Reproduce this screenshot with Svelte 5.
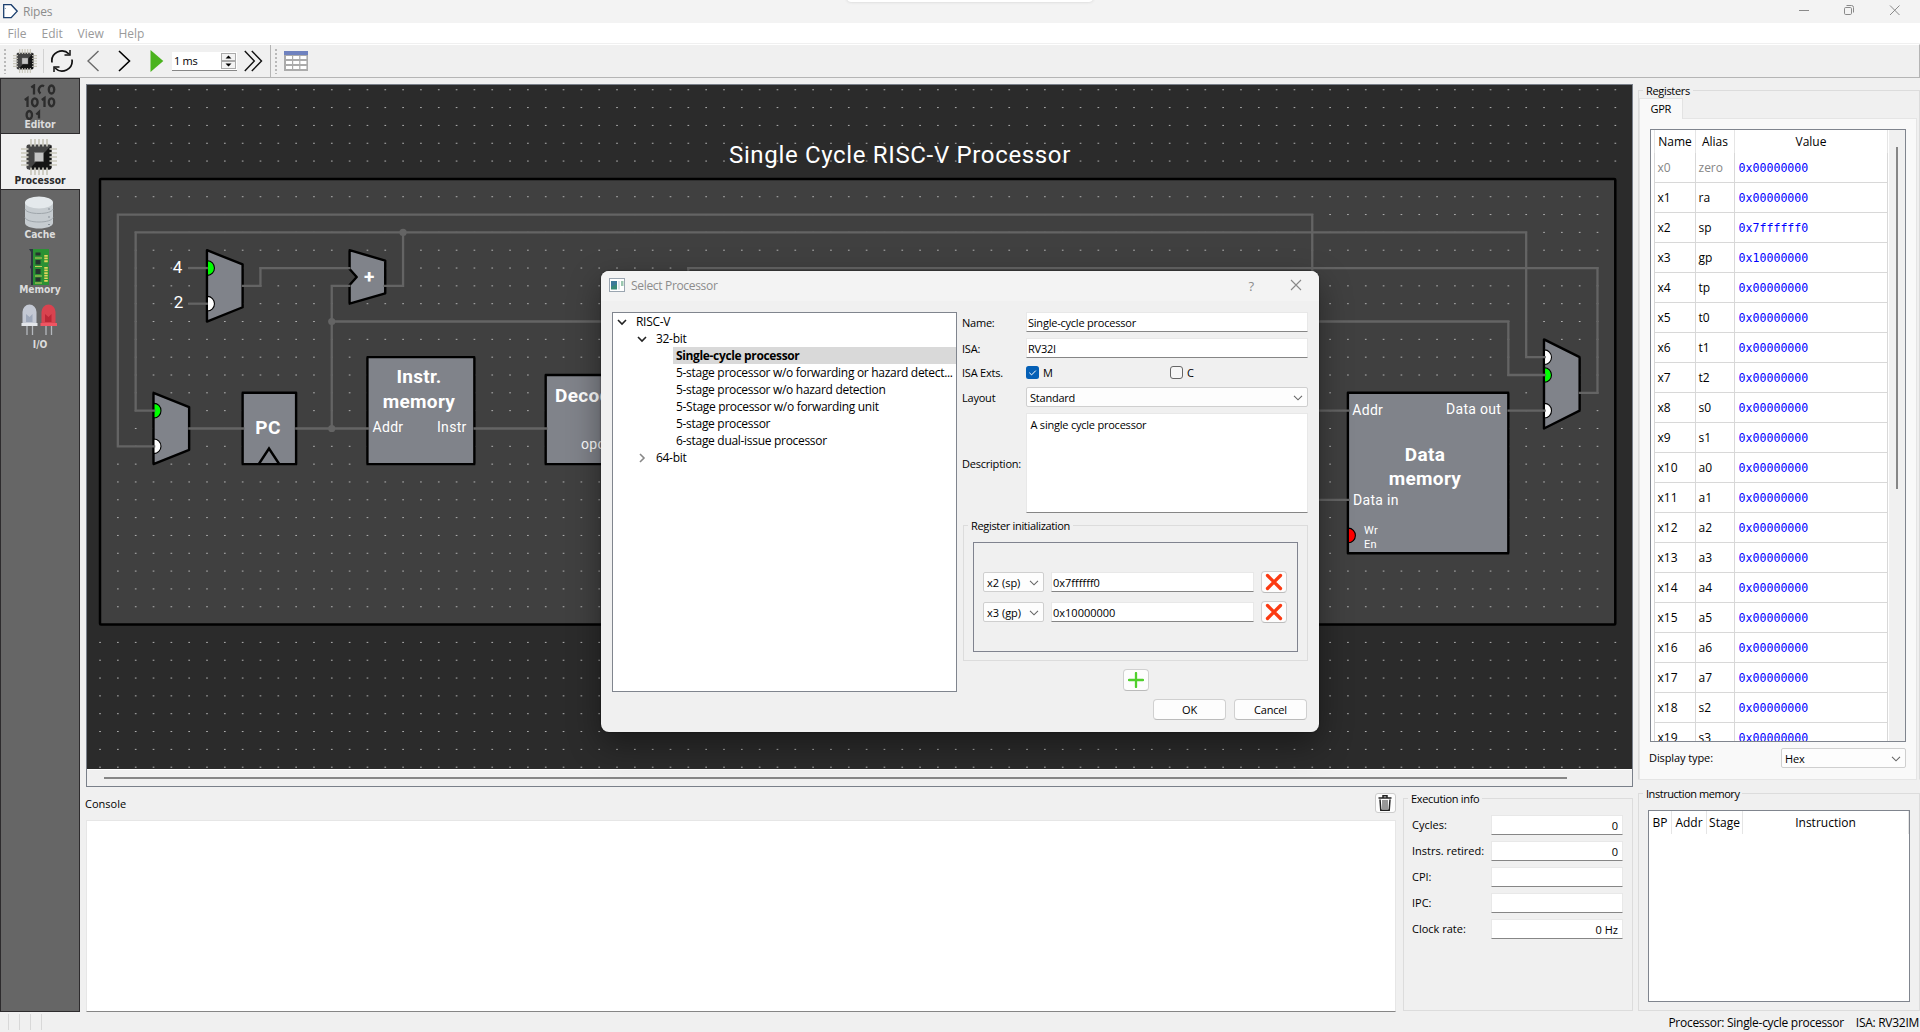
<script>
  const U = 17.827;
  const X = (g) => +(13 + g * U).toFixed(2);
  const Y = (g) => +(93.9 + g * U).toFixed(2);
  const pts = (list) => list.map(([a, b]) => `${X(a)},${Y(b)}`).join(' ');

  // Grid dots; positions under the outer frame are skipped
  const dots = [];
  for (let r = -5; r <= 33; r++) {
    for (let c = 0; c <= 85; c++) {
      const side = (c === 0 || c === 85) && r >= 0 && r <= 25;
      if (!side && r !== 0 && r !== 25) dots.push([c, r]);
    }
  }
  const dotPath = dots.map(([c, r]) => `M${X(c) - 0.8} ${Y(r)}h1.7`).join('');

  const wires = [
    [[3.1, 15], [1, 15], [1, 2], [68, 2], [68, 8]],
    [[3.1, 13], [2, 13], [2, 3], [80, 3], [80, 10], [81.1, 10]],
    [[15.9, 6], [17, 6], [17, 3]],
    [[4.95, 5], [6.05, 5]],
    [[4.95, 7], [6.05, 7]],
    [[7.95, 6], [9, 6], [9, 5], [14.05, 5]],
    [[4.95, 14], [8.1, 14]],
    [[10.95, 14], [15.1, 14]],
    [[13, 14], [13, 6], [14.05, 6]],
    [[13, 8], [79, 8], [79, 11], [81.1, 11]],
    [[20.95, 14], [25.1, 14]],
    [[82.95, 12], [84, 12], [84, 5], [33, 5], [33, 8]],
    [[66, 13], [70.1, 13]],
    [[66, 18], [70.1, 18]],
    [[78.95, 13], [81.1, 13]]
  ];
  const nodes = [[17, 3], [13, 8], [13, 14]];
  const muxes = [
    { p: [[6, 4], [8, 4.8], [8, 7.2], [6, 8]], ports: [[6, 5, '#00ff00'], [6, 7, '#fff']] },
    { p: [[3, 12], [5, 12.8], [5, 15.2], [3, 16]], ports: [[3, 13, '#00ff00'], [3, 15, '#fff']] },
    { p: [[81, 9], [83, 10], [83, 13], [81, 14]], ports: [[81, 10, '#fff'], [81, 11, '#00ff00'], [81, 13, '#fff']] }
  ];
  const boxes = [[8, 12, 3, 4], [15, 10, 6, 6], [25, 11, 6, 5], [70, 12, 9, 9]];

  const alias = ['zero', 'ra', 'sp', 'gp', 'tp', 't0', 't1', 't2', 's0', 's1', 'a0', 'a1', 'a2', 'a3', 'a4', 'a5', 'a6', 'a7', 's2', 's3'];
  const regs = alias.map((a, i) => ({
    name: 'x' + i,
    alias: a,
    value: i === 2 ? '0x7ffffff0' : i === 3 ? '0x10000000' : '0x00000000'
  }));

  const tree = [
    { t: 'RISC-V', l: 0, open: true },
    { t: '32-bit', l: 1, open: true },
    { t: 'Single-cycle processor', l: 2, sel: true },
    { t: '5-stage processor w/o forwarding or hazard detect...', l: 2 },
    { t: '5-stage processor w/o hazard detection', l: 2 },
    { t: '5-Stage processor w/o forwarding unit', l: 2 },
    { t: '5-stage processor', l: 2 },
    { t: '6-stage dual-issue processor', l: 2 },
    { t: '64-bit', l: 1, open: false }
  ];
  const stats = [['Cycles:', '0'], ['Instrs. retired:', '0'], ['CPI:', ''], ['IPC:', ''], ['Clock rate:', '0 Hz']];
  const inits = [['x2 (sp)', '0x7ffffff0'], ['x3 (gp)', '0x10000000']];
  const pins = [10, 14, 18, 22, 26];
</script>

{#snippet chip(size)}
  <svg width={size} height={size} viewBox="0 0 36 36">
    <path d={pins.map((p) => `M${p} 0v36M0 ${p}h36`).join('')} stroke="#c9c7bb" stroke-width="1.7" />
    <rect x="5.5" y="5.5" width="25" height="25" rx="2" fill="#444" />
    <path d="M30.5 6v22.500a2 2 0 0 1-2 2H8z" fill="#151515" />
    <path d={pins.map((p) => `M${p} 5v2.500M${p} 28.500v2.500M5 ${p}h2.500M28.500 ${p}h2.500`).join('')} stroke="#d8d6cc" stroke-width="1.5" />
    <rect x="13.500" y="13.500" width="9" height="9" fill="#c4c4c4" stroke="#777" stroke-width=".6" />
  </svg>
{/snippet}

{#snippet chev()}
  <svg width="10" height="6" viewBox="0 0 10 6"><path d="M1 .8l4 4 4-4" fill="none" stroke="#666" stroke-width="1.1" /></svg>
{/snippet}

<div class="app">
  <div class="titlebar">
    <svg class="logo" width="15" height="15" viewBox="0 0 15 15"><path d="M.7 .7h7.500l6 6.500-6 6.500H.7z" fill="#fff" stroke="#1c3f6e" stroke-width="1.300" /><path d="M1.500 4.500h1.500" stroke="#9ab" /></svg>
    <span class="ttl">Ripes</span>
    <span class="notch"></span>
    <svg class="winctl" width="104" height="12" viewBox="0 0 104 12" fill="none" stroke="#8a8a8a">
      <path d="M1 6.500h10M92 1.500l9.500 9.500M101.500 1.500L92 11" />
      <rect x="46.500" y="3.500" width="7" height="7" rx="1.200" /><path d="M48.500 1.500h5a2 2 0 0 1 2 2v5" />
    </svg>
  </div>
  <div class="menubar"><span class="m1">File</span><span class="m2">Edit</span><span class="m3">View</span><span>Help</span></div>
  <div class="toolbar">
    <i class="grip"></i>
    <span class="chipbtn">{@render chip(24)}</span>
    <i class="sep"></i>
    <svg class="refresh" width="24" height="24" viewBox="0 0 24 24" fill="none" stroke="#111" stroke-width="1.700">
      <path d="M2 13.500A10 10 0 0 1 19 5M22 10.500A10 10 0 0 1 5 19" /><path d="M14.500 6h5.500V1M9.500 18H4v5" stroke-width="1.500" />
    </svg>
    <svg class="prev" width="13" height="22" viewBox="0 0 13 22"><path d="M11.500 1L1 11l10.500 10" fill="none" stroke="#6a6a6a" stroke-width="1.400" /></svg>
    <svg class="next" width="13" height="22" viewBox="0 0 13 22"><path d="M1 1l10.500 10L1 21" fill="none" stroke="#000" stroke-width="1.600" /></svg>
    <svg class="play" width="14" height="22" viewBox="0 0 14 22"><path d="M.5 0L13.300 11 .5 22z" fill="#4ab31d" /></svg>
    <div class="spin"><span>1 ms</span>
      <svg width="15" height="16" viewBox="0 0 15 16"><rect x=".5" y=".5" width="14" height="7" fill="#f3f3f3" stroke="#aaa" /><rect x=".5" y="8.500" width="14" height="7" fill="#f3f3f3" stroke="#aaa" /><path d="M4.500 5.500h6l-3-3zM4.500 10.500h6l-3 3z" fill="#000" /></svg>
    </div>
    <svg class="ff" width="19" height="22" viewBox="0 0 19 22"><path d="M.800 1l9.500 10-9.500 10M7.800 1l9.700 10-9.700 10" fill="none" stroke="#111" stroke-width="1.400" /></svg>
    <i class="edge"></i>
    <i class="grip g2"></i>
    <svg class="tbl" width="24" height="20" viewBox="0 0 24 20"><rect width="24" height="20" fill="#ababab" /><rect width="24" height="4" fill="#6f82bf" />
      <path d="M2 6.500h6M9.200 6.500h6M16.400 6.500h6M2 11.500h6M9.200 11.500h6M16.400 11.500h6M2 16.500h6M9.200 16.500h6M16.400 16.500h6" stroke="#fff" stroke-width="3" /></svg>
  </div>

  <div class="main">
    <div class="side">
      <div class="tab ed">
        <svg width="36" height="37" viewBox="0 0 36 37" class="bin" fill="none" stroke="#2c2c2c" stroke-width="2.300">
          <path d="M13 10.500V1.500L10.300 3.500M23 2.300a3.200 4 0 1 0-3.500 7.200" /><ellipse cx="30.500" cy="5.500" rx="2.700" ry="4" />
          <path d="M6.500 23V14L3.800 16M23.500 23V14L20.800 16" /><ellipse cx="13.800" cy="18.300" rx="2.800" ry="4" /><ellipse cx="30.500" cy="18.300" rx="2.700" ry="4" />
          <ellipse cx="8.300" cy="31" rx="2.700" ry="4" /><path d="M18 34.500V28l-2.700 2.500" />
        </svg>
        <b>Editor</b>
      </div>
      <div class="tab on"><span>{@render chip(36)}</span><b>Processor</b></div>
      <div class="tab">
        <svg width="36" height="36" viewBox="0 0 36 36"><path d="M4 8v21c0 3 6 5.500 14 5.500s14-2.500 14-5.500V8z" fill="#c6ccd0" /><ellipse cx="18" cy="8.500" rx="14" ry="6" fill="#e4e9ec" />
          <path d="M4 15c1 3 7 4.500 14 4.500S31 18 32 15M4 23.500c1 3 7 4.500 14 4.500s13-1.500 14-4.500" fill="none" stroke="#9fa6ab" stroke-width="1" /><path d="M28 14.500v1M28 22.500v1M28 30v1" stroke="#68727a" stroke-width="1.300" /></svg>
        <b>Cache</b>
      </div>
      <div class="tab">
        <svg width="36" height="36" viewBox="0 0 36 36"><path d="M8 0h5v36H10V20l-1-2 1-2V3z" fill="#2b3540" /><path d="M12 0h16v14l-1 2 1 2v18H12z" fill="#2b9134" />
          <path d="M14.500 3.500h5v3h-5zM14.500 11h5v4.500h-5zM14.500 20h5v5h-5zM14.500 28.500h5v4h-5z" fill="#26352f" /><path d="M14 9h7M14 17.500h7M14 27h7M14 34h7" stroke="#c9c95a" stroke-width="1.200" /><path d="M25 6v8M25 18v15" stroke="#e4d65c" stroke-width="3.500" stroke-dasharray="1.700 .9" /></svg>
        <b>Memory</b>
      </div>
      <div class="tab">
        <svg width="36" height="36" viewBox="0 0 36 36"><path d="M6 22v9M11.500 22v9M25 22v9M30.500 22v9" stroke="#b4b8bd" stroke-width="1.300" />
          <path d="M1.500 20V8a7 7.500 0 0 1 14 0v12z" fill="#c4c9d4" /><path d="M.5 19h16v3H.5z" fill="#e3e6ea" /><path d="M5 10l3.500 3 3-3v8H5z" fill="#9ea8ba" />
          <path d="M20.500 20V8a7 7.500 0 0 1 14 0v12z" fill="#d9434f" /><path d="M19.500 19H36v3H19.500z" fill="#f05562" /><path d="M24 10l3.500 3 3-3v8H24z" fill="#bb2736" /></svg>
        <b>I/O</b>
      </div>
    </div>

    <div class="mid">
      <div class="canvas">
        <svg class="diagram" width="1545" height="684" viewBox="0 0 1545 684">
          <rect width="1545" height="684" fill="#2b2b2b" />
          <rect x={X(0)} y={Y(0)} width={85 * U} height={25 * U} rx="1" fill="#404040" stroke="#000" stroke-width="2.500" />
          <path class="dots" d={dotPath} />
          {#each boxes as [x, y, w, h]}
            <rect class="comp" x={X(x)} y={Y(y)} width={w * U} height={h * U} />
          {/each}
          {#each muxes as m}
            <polygon class="comp" points={pts(m.p)} />
            {#each m.ports as [px, py, c]}
              <path d={`M${X(px) + 0.5} ${Y(py) - 7.3}a7 7.300 0 0 1 0 14.600z`} fill={c} stroke="#000" stroke-width="1.100" />
            {/each}
          {/each}
          <polygon class="comp" points={pts([[14, 4], [16, 4.58], [16, 6.42], [14, 7], [14, 5.95], [14.4, 5.5], [14, 5.05]])} />
          <path d={`M${X(70) + 0.5} ${Y(20) - 7.3}a7 7.300 0 0 1 0 14.600z`} fill="#f00" stroke="#000" stroke-width="1.100" />
          <path d="M171.500 379.500l10.500-16 10.500 16" fill="none" stroke="#000" stroke-width="2.400" />
          {#each wires as w}<polyline class="wire" points={pts(w)} />{/each}
          {#each nodes as [a, b]}<circle cx={X(a)} cy={Y(b)} r="3.600" fill="#646464" />{/each}
          <text class="big" x="813" y="78">Single Cycle RISC-V Processor</text>
          <text class="num" x="90.500" y="188">4</text><text class="num" x="91.500" y="223">2</text>
          <text class="plus" x="282.300" y="198">+</text>
          <text class="h" x="181" y="349">PC</text>
          <text class="h" x="332" y="298">Instr.</text><text class="h" x="332" y="322.500">memory</text>
          <text class="h" x="501" y="316.500">Decode</text>
          <text class="p" x="285.500" y="347">Addr</text><text class="p" x="350" y="347">Instr</text><text class="p" x="494" y="364">opcode</text>
          <text class="p" x="1265.300" y="330">Addr</text><text class="p" x="1359" y="329">Data out</text><text class="p" x="1266" y="420">Data in</text>
          <text class="h" x="1338" y="376">Data</text><text class="h" x="1338" y="400">memory</text>
          <text class="s" x="1277" y="449">Wr</text><text class="s" x="1277" y="463">En</text>
        </svg>
        <div class="hscroll"><i></i></div>
      </div>
      <div class="bottom">
        <div class="console">
          <div class="chead"><span>Console</span>
            <span class="trash"><svg width="14" height="16" viewBox="0 0 14 16" fill="none" stroke="#222"><path d="M.5 3h13M5 2.500V.8h4v1.700" stroke-width="1.500" /><path d="M2 4.500l.8 10.700h8.400L12 4.500" stroke-width="1.500" /><path d="M5 5v9M7 5v9M9 5v9" stroke="#444" stroke-width="1.100" /></svg></span>
          </div>
          <div class="cbox"></div>
        </div>
        <div class="group exec"><span class="legend">Execution info</span>
          {#each stats as [l, v]}<div class="stat"><span>{l}</span><div class="field r">{v}</div></div>{/each}
        </div>
      </div>
    </div>

    <div class="right">
      <div class="group regs"><span class="legend">Registers</span>
        <div class="gpr">GPR</div>
        <div class="pane">
          <div class="rtable">
            <div class="rows">
              <div class="row head"><span>Name</span><span>Alias</span><span>Value</span></div>
              {#each regs as r, i}
                <div class="row" class:dim={i === 0}><span>{r.name}</span><span>{r.alias}</span><span class="mono">{r.value}</span></div>
              {/each}
            </div>
            <div class="vs"><i></i></div>
          </div>
          <div class="disp"><span>Display type:</span><div class="combo"><span>Hex</span>{@render chev()}</div></div>
        </div>
      </div>
      <div class="group imem"><span class="legend">Instruction memory</span>
        <div class="itable"><span>BP</span><span>Addr</span><span>Stage</span><span>Instruction</span></div>
      </div>
    </div>
  </div>
  <div class="status"><i></i><i></i><i></i><i></i><span class="sp1">Processor: Single-cycle processor</span><span class="sp2">ISA: RV32IM</span></div>

  <div class="dialog">
    <div class="dtitle">
      <svg width="16" height="14" viewBox="0 0 16 14"><rect x=".5" y=".5" width="15" height="13" fill="#fff" stroke="#9aa5b0" /><rect x="2" y="3" width="6" height="8.500" fill="#3a8a78" /><path d="M2 3h6v3l-6 3z" fill="#3f6fb0" opacity=".6" /><path d="M9 3h2v8.500H9z" fill="#dde4ea" /><path d="M12 3h2.500v5H12z" fill="#9cc8b0" /></svg>
      <span class="dname">Select Processor</span><span class="q">?</span>
      <svg class="x" width="12" height="12" viewBox="0 0 12 12"><path d="M1 1l10 10M11 1L1 11" stroke="#888" stroke-width="1.100" /></svg>
    </div>
    <div class="dbody">
      <div class="tree">
        {#each tree as n}
          <div class={'node l' + n.l} class:sel={n.sel}>
            {#if n.l < 2}
              <svg width="10" height="10" viewBox="0 0 10 10" fill="none"><path d={n.open ? 'M1 3l4 4 4-4' : 'M3 1l4 4-4 4'} stroke={n.open ? '#222' : '#888'} stroke-width="1.600" /></svg>
            {/if}
            <span>{n.t}</span>
          </div>
        {/each}
      </div>
      <div class="form">
        <div class="fr"><span>Name:</span><div class="field">Single-cycle processor</div></div>
        <div class="fr"><span>ISA:</span><div class="field">RV32I</div></div>
        <div class="fr exts"><span>ISA Exts.</span>
          <div class="ck"><svg width="13" height="13" viewBox="0 0 13 13"><rect width="13" height="13" rx="2.500" fill="#0560b6" /><path d="M3.300 6.700l2.300 2.200 4.200-4.300" fill="none" stroke="#fff" /></svg>M</div>
          <div class="ck"><svg width="13" height="13" viewBox="0 0 13 13"><rect x=".5" y=".5" width="12" height="12" rx="2.500" fill="#f6f6f6" stroke="#666" /></svg>C</div>
        </div>
        <div class="fr"><span>Layout</span><div class="combo"><span>Standard</span>{@render chev()}</div></div>
        <div class="fr desc"><span>Description:</span><div class="field area">A single cycle processor</div></div>
        <div class="group init"><span class="legend">Register initialization</span>
          <div class="frame">
            {#each inits as [r, v]}
              <div class="ir"><div class="combo"><span>{r}</span>{@render chev()}</div><div class="field">{v}</div>
                <div class="btn sq"><svg width="18" height="18" viewBox="0 0 18 18"><path d="M2.500 2.500l13 13M15.500 2.500l-13 13" stroke="#fb3a12" stroke-width="3.300" stroke-linecap="round" /></svg></div>
              </div>
            {/each}
          </div>
        </div>
        <div class="btn sq add"><svg width="16" height="16" viewBox="0 0 16 16"><path d="M8 1v14M1 8h14" stroke="#4fd02c" stroke-width="2.300" stroke-linecap="round" /></svg></div>
      </div>
    </div>
    <div class="dbtns"><div class="btn">OK</div><div class="btn">Cancel</div></div>
  </div>
</div>

<style>
  :global(body) { background: #f0f0f0; overflow: hidden; }
  .app, .app * { box-sizing: border-box; }
  .app { position: relative; width: 1920px; height: 1032px; display: flex; flex-direction: column; background: #f0f0f0; color: #000; font: 11px/14px "Open Sans", sans-serif; white-space: nowrap; }
  svg { display: block; flex: none; }
  .titlebar { height: 23px; background: #f3f3f3; display: flex; align-items: center; padding-left: 3px; position: relative; font-size: 12px; color: #8c8c8c; }
  .ttl { margin-left: 5px; padding-top: 1px; letter-spacing: -.2px; }
  .notch { position: absolute; left: 847px; top: -6px; width: 246px; height: 8px; border-radius: 5px; background: #fff; box-shadow: 0 0 3px #ccc; }
  .winctl { margin-left: auto; margin-right: 18px; margin-top: -3px; }
  .menubar { height: 21px; background: #fff; border-bottom: 1px solid #f0f0f0; display: flex; align-items: center; padding: 2px 0 0 7.5px; font-size: 12px; color: #9a9a9a; }
  .m1 { width: 34px; } .m2 { width: 36px; } .m3 { width: 41px; }
  .toolbar { height: 34px; border-top: 1px solid #fff; border-bottom: 1px solid #b5b5b5; border-right: 1px solid #b5b5b5; display: flex; align-items: center; }
  .grip { width: 2px; height: 25px; margin-left: 4px; background: repeating-linear-gradient(#b9b9b9 0 2px, transparent 2px 4px); }
  .chipbtn { margin-left: 7px; }
  .sep { width: 1px; height: 24px; background: #d2d2d2; margin-left: 6px; }
  .refresh { margin-left: 6px; } .prev { margin-left: 13px; } .next { margin-left: 18px; } .play { margin-left: 19px; }
  .spin { margin-left: 8px; width: 65px; height: 19px; background: #fff; border-bottom: 1px solid #868686; display: flex; align-items: center; justify-content: space-between; padding: 0 1px 0 2px; letter-spacing: -.3px; }
  .spin span { padding-top: 1px; }
  .ff { margin-left: 7px; }
  .edge { width: 1px; height: 33px; background: #b5b5b5; margin-left: 7px; }
  .tbl { margin-left: 7px; }
  .main { flex: 1; display: flex; min-height: 0; }
  .side { width: 80px; background: #666; border: 1px solid #2d2b2d; border-top-width: 0; }
  .tab { height: 55px; display: flex; flex-direction: column; align-items: center; padding: 4px 2px 0 0; color: #dcdcdc; font: bold 10.2px/12px "DejaVu Sans Condensed", "DejaVu Sans", sans-serif; font-stretch: condensed; }
  .tab b { margin-top: -1px; padding-left: 2px; }
  .tab.ed { height: 56px; border: solid #2d2b2d; border-width: 1px 0; padding-top: 5px; }
  .bin { margin-bottom: -1px; }
  .tab.on { height: 56px; background: #f0f0f0; color: #2a2a2a; margin-right: -1px; border-bottom: 1px solid #2d2b2d; padding-top: 5px; padding-right: 3px; }
  .tab.on b { margin-top: 0; }
  .mid { width: 1553px; padding: 6px 0 0 6px; display: flex; flex-direction: column; }
  .canvas { height: 703px; border: 1px solid #7a808a; }
  .hscroll { height: 17px; border-top: 1px solid #fff; padding: 7px 0 0 17px; }
  .hscroll i { display: block; width: 1463px; height: 2px; background: #868686; }
  .dots { stroke: #b0b0b0; stroke-width: 1; }
  .comp { fill: #80838a; stroke: #000; stroke-width: 2.4; stroke-linejoin: round; }
  .wire { fill: none; stroke: #646464; stroke-width: 2.3; }
  text { font-family: Roboto, sans-serif; fill: #fff; }
  .big { font-size: 24px; text-anchor: middle; letter-spacing: .66px; }
  .num { font-size: 17px; text-anchor: middle; }
  .plus { font-size: 19px; font-weight: 700; text-anchor: middle; }
  .h { font-size: 19px; font-weight: 700; text-anchor: middle; letter-spacing: .3px; }
  .p { font-size: 14px; letter-spacing: .3px; }
  .s { font-size: 11px; letter-spacing: .3px; }
  .bottom { flex: 1; display: flex; gap: 7px; }
  .console { width: 1310px; display: flex; flex-direction: column; }
  .chead { height: 33px; display: flex; justify-content: space-between; align-items: center; }
  .chead > span:first-child { margin-left: -1px; }
  .trash { width: 21px; height: 20px; border: 1px solid #ccc; border-radius: 3px; background: #fdfdfd; display: flex; align-items: center; justify-content: center; margin-bottom: 1px; padding-right: 1px; }
  .cbox { flex: 1; background: #fff; border: 1px solid #e6e6e6; border-bottom-color: #868686; }
  .group { position: relative; border: 1px solid #dcdcdc; }
  .legend { position: absolute; left: 4px; top: -7px; padding: 0 3px; background: #f0f0f0; letter-spacing: -.32px; }
  .exec { width: 230px; margin: 11px 0 0; padding: 16px 9px 0 8px; height: 213px; }
  .stat { height: 20px; margin-bottom: 6px; display: flex; justify-content: space-between; align-items: center; }
  .stat .field { width: 132px; }
  .field { height: 20px; background: #fff; border: 1px solid #e8e8e8; border-bottom-color: #868686; display: flex; align-items: center; padding: 1px 0 0 1px; }
  .field.r { justify-content: flex-end; padding-right: 4px; }
  .right { flex: 1; padding: 12px 0 0 5px; }
  .regs { height: 690px; width: 282px; border-bottom-color: transparent; padding-top: 7px; }
  .gpr { width: 44px; height: 21px; background: #f9f9f9; border: 1px solid #e3e3e3; border-bottom: 0; margin-bottom: -1px; position: relative; padding: 3px 0 0 10.5px; letter-spacing: -.3px; }
  .pane { width: 278px; height: 662px; background: #f9f9f9; border: 1px solid #e5e5e5; padding: 10px 9px 0 11px; }
  .rtable { width: 256px; height: 613px; border: 1px solid #80858e; background: #fff; display: flex; overflow: hidden; margin-left: -1px; }
  .rows { width: 237px; padding-left: 3px; }
  .row { display: flex; height: 30px; }
  .row span { border-right: 1px solid #d8d8d8; border-bottom: 1px solid #d8d8d8; display: flex; align-items: center; padding-left: 2.5px; font-size: 12px; }
  .row span:nth-child(1) { width: 42px; border-left: 1px solid #d8d8d8; } .row span:nth-child(2) { width: 39px; } .row span:nth-child(3) { width: 153px; padding-left: 3.5px; }
  .row.head { height: 23px; }
  .row.head span { border-color: #e5e5e5; border-bottom: 0; justify-content: center; padding: 0; font-size: 12px; }
  .dim span { color: #868686; }
  .row .mono, .dim .mono { font-family: "DejaVu Sans Mono", monospace; font-size: 11.6px; color: #00f; }
  .vs { flex: 1; background: #f0f0f0; margin-left: 1px; padding: 17px 0 0 7px; }
  .vs i { display: block; width: 2px; height: 342px; background: #868686; }
  .disp { display: flex; justify-content: space-between; align-items: center; padding-top: 6px; margin-left: -2px; width: 257px; letter-spacing: -.1px; }
  .combo { height: 20px; border: 1px solid #cfcfcf; border-radius: 2px; background: #fdfdfd; display: flex; align-items: center; justify-content: space-between; padding: 1px 4px 0 3px; }
  .disp .combo { width: 125px; }
  .imem { width: 282px; height: 218px; margin-top: 13px; padding: 16px 0 0 9px; }
  .imem .legend { letter-spacing: -.45px; }
  .itable { width: 262px; height: 192px; border: 1px solid #80858e; background: #fff; display: flex; padding-left: 0; font-size: 12px; }
  .itable span { height: 23px; border-right: 1px solid #e5e5e5; text-align: center; line-height: 24px; }
  .itable span:nth-child(1) { width: 23px; } .itable span:nth-child(2) { width: 35px; } .itable span:nth-child(3) { width: 36px; } .itable span:nth-child(4) { flex: 1; }
  .status { height: 20px; display: flex; align-items: center; padding-left: 8px; font-size: 12px; letter-spacing: -.28px; }
  .status i { width: 1px; height: 16px; background: #d8d8d8; margin-right: 10px; }
  .status span { padding-top: 1px; }
  .sp1 { margin-left: auto; margin-right: 12px; } .sp2 { margin-right: 1px; }
  .dialog { position: absolute; left: 601px; top: 271px; width: 718px; height: 461px; background: #f0f0f0; border-radius: 8px; box-shadow: 0 12px 32px rgba(0,0,0,.4), 0 0 2px rgba(0,0,0,.6); overflow: visible; }
  .dtitle { height: 30px; background: #f3f3f3; border-radius: 8px 8px 0 0; display: flex; align-items: center; padding: 0 17px 2px 8px; font-size: 12px; color: #8c8c8c; }
  .dname { margin-left: 6px; padding-top: 2px; letter-spacing: -.32px; } .q { margin-left: auto; margin-right: 36px; font-size: 13px; padding-top: 1px; }
  .dbody { display: flex; padding: 11px 0 0 11px; gap: 5px; }
  .tree { width: 345px; height: 380px; background: #fff; border: 1px solid #80858e; font-size: 12px; line-height: 17px; letter-spacing: -.3px; }
  .node { height: 17px; display: flex; align-items: center; }
  .l0 { padding-left: 4px; } .l1 { padding-left: 24px; } .l0 span, .l1 span { margin-left: 9px; } .l2 { margin-left: 60px; padding-left: 3px; }
  .sel { background: #d9d9d9; font-weight: 700; letter-spacing: -.35px; }
  .form { width: 346px; display: flex; flex-direction: column; letter-spacing: -.22px; }
  .fr { display: flex; align-items: center; height: 20px; margin-bottom: 6px; }
  .fr > span { flex: none; width: 64px; padding-top: 1px; }
  .fr > .field, .fr > .combo { width: 282px; }
  .exts { height: 17px; }
  .ck { flex: none; width: 144px; display: flex; align-items: center; gap: 4px; }
  .desc { height: 100px; margin-bottom: 12px; }
  .desc .area { height: 100px; align-items: flex-start; padding: 4px 0 0 3.5px; }
  .init { height: 136px; padding: 16px 9px 0; margin-left: 1px; }
  .frame { height: 110px; border: 1px solid #80838f; padding: 28px 10px 0 9px; letter-spacing: 0; }
  .ir { height: 22px; margin-bottom: 8px; display: flex; align-items: center; }
  .ir .combo { width: 61px; } .ir .field { width: 203px; margin-left: 7px; }
  .btn { height: 21px; width: 73px; background: #fdfdfd; border: 1px solid #d0d0d0; border-bottom-color: #bbb; border-radius: 4px; display: flex; align-items: center; justify-content: center; letter-spacing: -.2px; }
  .sq { width: 26px; height: 22px; } .ir .sq { margin-left: 7px; }
  .add { margin: 8px 0 0 161px; }
  .dbtns { display: flex; justify-content: flex-end; gap: 8px; padding: 7px 12px 0 0; }
</style>
